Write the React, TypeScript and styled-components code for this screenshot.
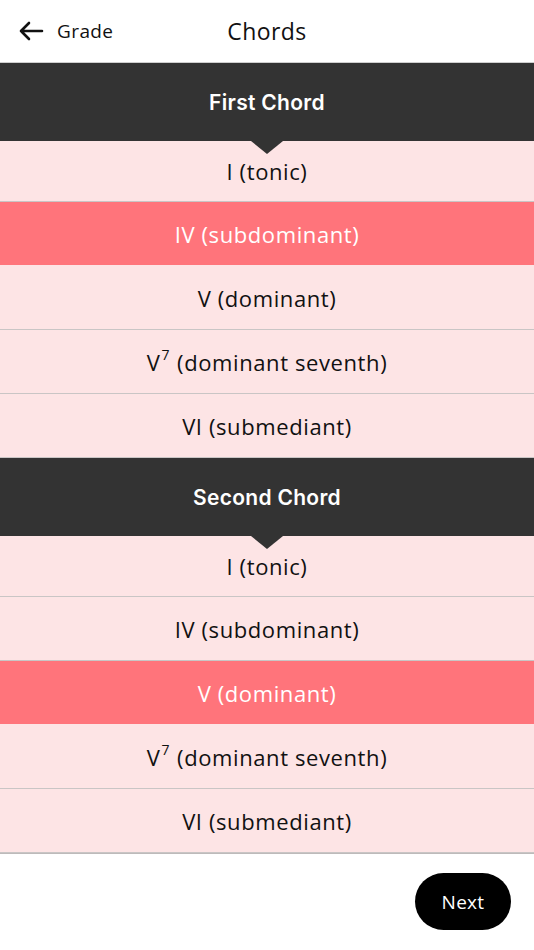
import React from 'react';
import styled, { createGlobalStyle } from 'styled-components';

const GlobalStyle = createGlobalStyle`
  html, body {
    margin: 0;
    padding: 0;
    background: #ffffff;
  }
  body {
    font-family: "Open Sans", "Noto Sans", sans-serif;
    color: #111;
  }
`;

const Page = styled.div`
  width: 534px;
  min-height: 950px;
  display: flex;
  flex-direction: column;
  background: #fff;
`;

const TopBar = styled.header`
  height: 62px;
  display: grid;
  grid-template-columns: 1fr auto 1fr;
  align-items: center;
  border-bottom: 1px solid #cfcfcf;
`;

const BackLink = styled.div`
  display: flex;
  align-items: center;
  gap: 13px;
  padding-left: 18px;
  font-size: 19px;
  letter-spacing: 0.4px;
  color: #111;
`;

const Title = styled.h1`
  margin: 0;
  font-size: 23px;
  font-weight: 400;
  letter-spacing: 0.4px;
  color: #111;
`;

const SectionHead = styled.div`
  position: relative;
  height: 78px;
  background: #333333;
  color: #fff;
  display: flex;
  align-items: center;
  justify-content: center;
  font-family: Inter, Roboto, "Liberation Sans", sans-serif;
  font-weight: 600;
  font-size: 21px;
  letter-spacing: 0.3px;

  &::after {
    content: '';
    position: absolute;
    left: 50%;
    bottom: -13px;
    transform: translateX(-50%);
    border-left: 16px solid transparent;
    border-right: 16px solid transparent;
    border-top: 13px solid #333333;
    z-index: 2;
  }
`;

const OptionList = styled.div`
  display: flex;
  flex-direction: column;
`;

const Option = styled.div<{ $active?: boolean }>`
  box-sizing: border-box;
  height: 64px;
  display: flex;
  align-items: center;
  justify-content: center;
  font-size: 22px;
  letter-spacing: 0.6px;
  background: ${p => (p.$active ? '#ff747b' : '#fde4e5')};
  color: ${p => (p.$active ? '#ffffff' : '#111111')};
  border-bottom: 1px solid ${p => (p.$active ? '#fde4e5' : '#c9c5c5')};

  &:first-child {
    height: 61px;
  }

  sup {
    font-size: 14px;
    line-height: 0;
    position: relative;
    top: -7px;
    margin-left: 1px;
    margin-right: 7px;
  }
`;

const Footer = styled.div`
  display: flex;
  justify-content: flex-end;
  padding: 19px 23px 0 0;
  border-top: 1px solid #bdbaba;
`;

const NextButton = styled.button`
  width: 96px;
  height: 57px;
  border: none;
  border-radius: 29px;
  background: #000;
  color: #fff;
  font-family: "Open Sans", "Noto Sans", sans-serif;
  font-size: 19px;
  letter-spacing: 0.3px;
  cursor: pointer;
`;

type Chord = { label: string; sup?: string; rest: string };

const chords: Chord[] = [
  { label: 'I', rest: '(tonic)' },
  { label: 'IV', rest: '(subdominant)' },
  { label: 'V', rest: '(dominant)' },
  { label: 'V', sup: '7', rest: '(dominant seventh)' },
  { label: 'VI', rest: '(submediant)' },
];

function ChordGroup({ title, selected }: { title: string; selected: number }) {
  return (
    <>
      <SectionHead>{title}</SectionHead>
      <OptionList>
        {chords.map((c, i) => (
          <Option key={i} $active={i === selected}>
            {c.label}
            {c.sup ? <sup>{c.sup}</sup> : '\u00a0'}
            {c.rest}
          </Option>
        ))}
      </OptionList>
    </>
  );
}

export default function App() {
  return (
    <Page>
      <GlobalStyle />
      <TopBar>
        <BackLink>
          <svg width="26" height="20" viewBox="0 0 26 20" fill="none" stroke="#111" strokeWidth="2.6" strokeLinecap="round" strokeLinejoin="round">
            <path d="M24 10H3M11 2L3 10l8 8" />
          </svg>
          Grade
        </BackLink>
        <Title>Chords</Title>
        <div />
      </TopBar>
      <ChordGroup title="First Chord" selected={1} />
      <ChordGroup title="Second Chord" selected={2} />
      <Footer>
        <NextButton>Next</NextButton>
      </Footer>
    </Page>
  );
}
